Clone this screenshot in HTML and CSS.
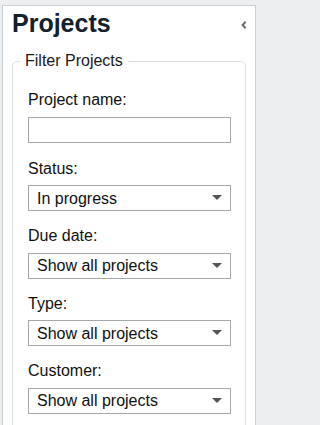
FILE: index.html
```html
<!DOCTYPE html>
<html lang="en">
<head>
<meta charset="utf-8">
<title>Projects</title>
<link rel="stylesheet" href="styles.css">
</head>
<body>
<div class="panel">
  <div class="header">
    <h1 class="title">Projects</h1>
    <button class="collapse" type="button" aria-label="Collapse">
      <svg width="6" height="8" viewBox="0 0 6 8"><polyline points="4.6,0.8 1.6,4 4.6,7.2" fill="none" stroke="#6b6b6b" stroke-width="2"/></svg>
    </button>
  </div>
  <fieldset class="filters">
    <legend class="legend">Filter Projects</legend>
    <div class="group group-first">
      <label class="label" for="pname">Project name:</label>
      <input class="control text" id="pname" type="text">
    </div>
    <div class="group">
      <label class="label" for="status">Status:</label>
      <div class="select-wrap">
        <select class="control select" id="status"><option>In progress</option></select>
      </div>
    </div>
    <div class="group">
      <label class="label" for="due">Due date:</label>
      <div class="select-wrap">
        <select class="control select" id="due"><option>Show all projects</option></select>
      </div>
    </div>
    <div class="group">
      <label class="label" for="type">Type:</label>
      <div class="select-wrap">
        <select class="control select" id="type"><option>Show all projects</option></select>
      </div>
    </div>
    <div class="group">
      <label class="label" for="customer">Customer:</label>
      <div class="select-wrap">
        <select class="control select" id="customer"><option>Show all projects</option></select>
      </div>
    </div>
  </fieldset>
</div>
</body>
</html>
```
FILE: styles.css
```css
html, body {
  margin: 0;
  padding: 0;
  height: 100%;
  overflow: hidden;
}
html {
  background: #eceef0;
}
body {
  width: 257px;
  background: #eceef0;
  font-family: "Liberation Sans", Arial, sans-serif;
  padding-top: 5px;
  box-sizing: border-box;
}
.panel {
  margin: 0 1px 0 2px;
  background: #ffffff;
  border: 1px solid #c8d0d8;
  min-height: 600px;
}
.header {
  display: flex;
  justify-content: space-between;
  align-items: center;
  padding: 3px 8px 0 9px;
  height: 28px;
}
.title {
  margin: 0;
  font-size: 25px;
  line-height: 28px;
  font-weight: bold;
  color: #13202d;
}
.collapse {
  border: 0;
  background: none;
  padding: 0;
  margin-top: 3px;
  width: 6px;
  height: 8px;
  display: flex;
}
.filters {
  margin: 15px 9px 0 9px;
  padding: 21px 14px 0 15px;
  border: 1px solid #d9e0e6;
  border-radius: 5px;
  min-width: 0;
}
.legend {
  margin-left: -8px;
  padding: 0 5px;
  font-size: 16px;
  line-height: 18px;
  color: #1a1a1a;
}
.group {
  margin-bottom: 16px;
}
.group-first {
  margin-bottom: 17px;
}
.label {
  display: block;
  font-size: 16px;
  line-height: 18px;
  color: #111111;
  margin-bottom: 7.5px;
}
.control {
  display: block;
  box-sizing: border-box;
  width: 100%;
  height: 26px;
  margin: 0;
  border: 1px solid #a8a8a8;
  border-radius: 0;
  background: #ffffff;
  font-family: "Liberation Sans", Arial, sans-serif;
  font-size: 16px;
  color: #111111;
  outline: none;
}
.text {
  padding: 0 8px;
}
.select-wrap {
  position: relative;
}
.select {
  -webkit-appearance: none;
  appearance: none;
  padding: 0 24px 0 8px;
}
.select-wrap::after {
  content: "";
  position: absolute;
  right: 9px;
  top: 10px;
  width: 0;
  height: 0;
  border-left: 5px solid transparent;
  border-right: 5px solid transparent;
  border-top: 5px solid #555555;
  pointer-events: none;
}
```
